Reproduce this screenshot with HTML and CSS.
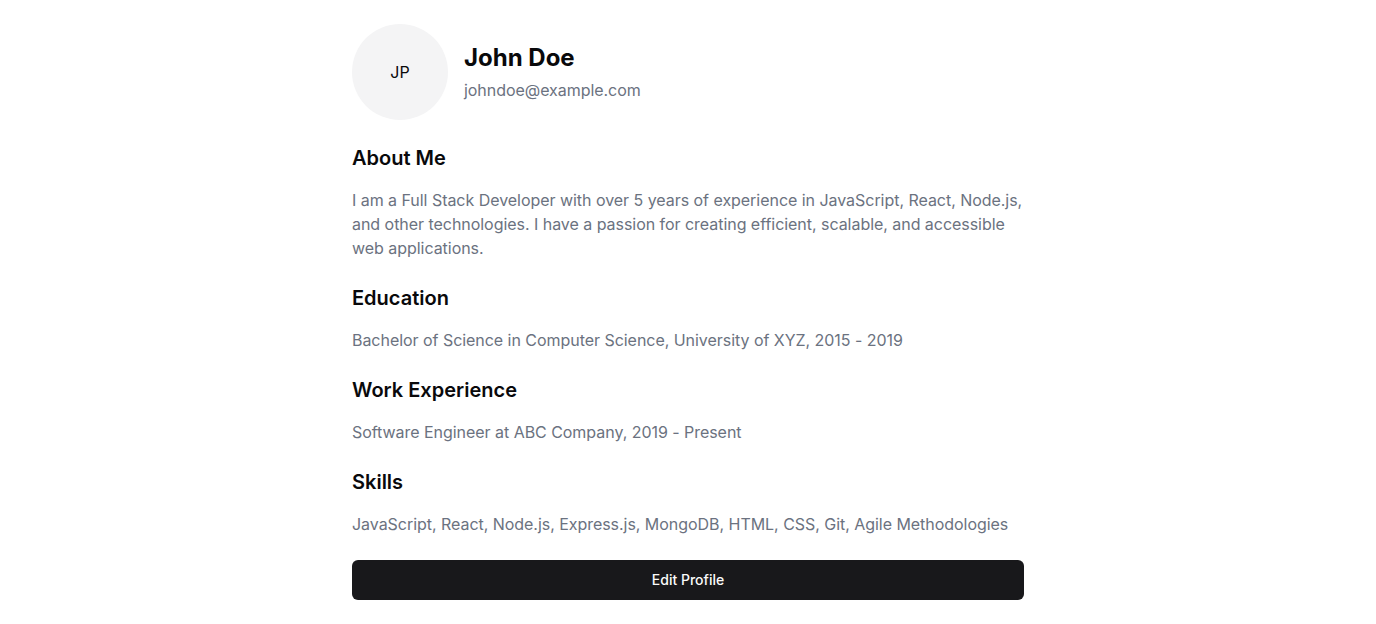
FILE: index.html
```html
<!DOCTYPE html>
<html lang="en">
<head>
<meta charset="utf-8">
<title>Profile</title>
<link rel="stylesheet" href="styles.css">
</head>
<body>
<main class="profile">
  <header class="profile-header">
    <div class="avatar">JP</div>
    <div class="identity">
      <h1 class="name">John Doe</h1>
      <p class="email">johndoe@example.com</p>
    </div>
  </header>
  <section class="section">
    <h2 class="section-title">About Me</h2>
    <p class="section-text">I am a Full Stack Developer with over 5 years of experience in JavaScript, React, Node.js, and other technologies. I have a passion for creating efficient, scalable, and accessible web applications.</p>
  </section>
  <section class="section">
    <h2 class="section-title">Education</h2>
    <p class="section-text">Bachelor of Science in Computer Science, University of XYZ, 2015 - 2019</p>
  </section>
  <section class="section">
    <h2 class="section-title">Work Experience</h2>
    <p class="section-text">Software Engineer at ABC Company, 2019 - Present</p>
  </section>
  <section class="section">
    <h2 class="section-title">Skills</h2>
    <p class="section-text">JavaScript, React, Node.js, Express.js, MongoDB, HTML, CSS, Git, Agile Methodologies</p>
  </section>
  <button class="edit-btn" type="button">Edit Profile</button>
</main>
</body>
</html>
```
FILE: styles.css
```css
* { box-sizing: border-box; }
html, body { margin: 0; padding: 0; background: #ffffff; }
body {
  font-family: Inter, "Noto Sans", "Liberation Sans", sans-serif;
  color: #09090b;
}
.profile {
  width: 672px;
  margin: 0 auto;
  padding: 24px 0;
  display: flex;
  flex-direction: column;
  gap: 24px;
}
.profile-header {
  display: flex;
  align-items: center;
  gap: 16px;
}
.avatar {
  width: 96px;
  height: 96px;
  border-radius: 50%;
  background: #f4f4f5;
  display: flex;
  align-items: center;
  justify-content: center;
  font-size: 16px;
  color: #09090b;
  flex-shrink: 0;
}
.identity { display: flex; flex-direction: column; gap: 4px; }
.name {
  margin: 0;
  font-size: 24px;
  line-height: 32px;
  font-weight: 700;
}
.email {
  margin: 0;
  font-size: 16px;
  line-height: 24px;
  color: #6b7280;
  letter-spacing: -0.05px;
}
.section { display: flex; flex-direction: column; gap: 16px; }
.section-title {
  margin: 0;
  font-size: 20px;
  line-height: 28px;
  font-weight: 600;
}
.section-text {
  margin: 0;
  font-size: 16px;
  line-height: 24px;
  color: #6b7280;
  letter-spacing: -0.04px;
}
.edit-btn {
  height: 40px;
  padding: 0 0 2px;
  border: 0;
  border-radius: 6px;
  background: #18181b;
  color: #fafafa;
  font-family: inherit;
  font-size: 14px;
  font-weight: 500;
  cursor: pointer;
}
```
